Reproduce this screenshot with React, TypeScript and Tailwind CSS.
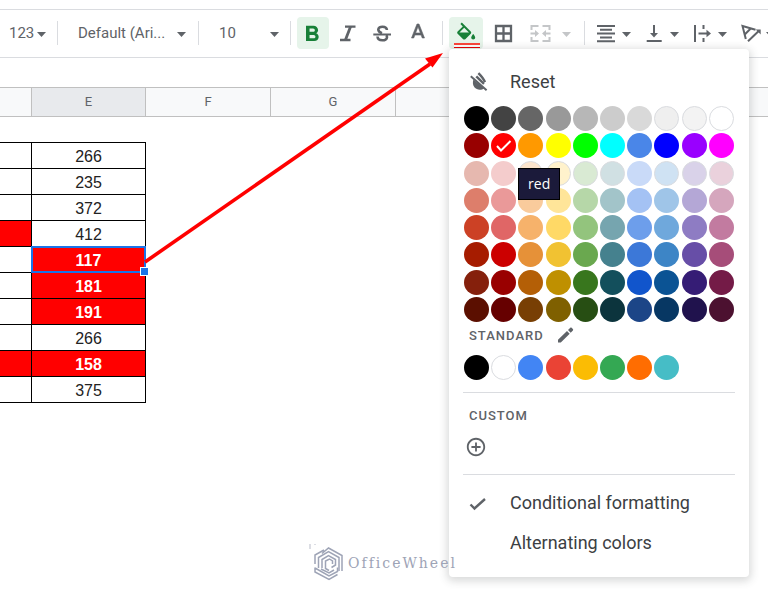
import type { ReactNode } from "react";
import { MdAddCircleOutline } from "react-icons/md";

const PALETTE = [
  ["#000000", "#434343", "#666666", "#999999", "#b7b7b7", "#cccccc", "#d9d9d9", "#efefef", "#f3f3f3", "#ffffff"],
  ["#980000", "#ff0000", "#ff9900", "#ffff00", "#00ff00", "#00ffff", "#4a86e8", "#0000ff", "#9900ff", "#ff00ff"],
  ["#e6b8af", "#f4cccc", "#fce5cd", "#fff2cc", "#d9ead3", "#d0e0e3", "#c9daf8", "#cfe2f3", "#d9d2e9", "#ead1dc"],
  ["#dd7e6b", "#ea9999", "#f9cb9c", "#ffe599", "#b6d7a8", "#a2c4c9", "#a4c2f4", "#9fc5e8", "#b4a7d6", "#d5a6bd"],
  ["#cc4125", "#e06666", "#f6b26b", "#ffd966", "#93c47d", "#76a5af", "#6d9eeb", "#6fa8dc", "#8e7cc3", "#c27ba0"],
  ["#a61c00", "#cc0000", "#e69138", "#f1c232", "#6aa84f", "#45818e", "#3c78d8", "#3d85c6", "#674ea7", "#a64d79"],
  ["#85200c", "#990000", "#b45f06", "#bf9000", "#38761d", "#134f5c", "#1155cc", "#0b5394", "#351c75", "#741b47"],
  ["#5b0f00", "#660000", "#783f04", "#7f6000", "#274e13", "#0c343d", "#1c4587", "#073763", "#20124d", "#4c1130"],
];

const STANDARD = ["#000000", "#ffffff", "#4285f4", "#ea4335", "#fbbc04", "#34a853", "#ff6d01", "#46bdc6"];

// These need a ring to stay visible on white
const PALE = ["#efefef", "#f3f3f3", "#ffffff", "#fce5cd", "#fff2cc", "#d9ead3", "#d0e0e3", "#cfe2f3", "#d9d2e9", "#ead1dc"];

const ROWS = [
  { value: 266 },
  { value: 235 },
  { value: 372 },
  { value: 412, leftRed: true },
  { value: 117, red: true, selected: true },
  { value: 181, red: true },
  { value: 191, red: true },
  { value: 266 },
  { value: 158, red: true, leftRed: true },
  { value: 375 },
];

function Caret() {
  return (
    <svg width="9" height="5" viewBox="0 0 9 5" className="mt-0.5 shrink-0" fill="currentColor" aria-hidden="true">
      <path d="M0 0h9L4.5 5z" />
    </svg>
  );
}

function Icon({ children }: { children: ReactNode }) {
  return (
    <svg
      width="24"
      height="24"
      viewBox="0 0 24 24"
      className="shrink-0"
      fill="none"
      stroke="currentColor"
      strokeWidth="2"
      aria-hidden="true"
    >
      {children}
    </svg>
  );
}

function Separator({ className = "" }: { className?: string }) {
  return <span className={`mt-1 h-6 w-px shrink-0 bg-[#dadce0] ${className}`} />;
}

function ToolButton({ label, className, children }: { label: string; className: string; children: ReactNode }) {
  return (
    <button type="button" aria-label={label} className={`flex h-8 shrink-0 items-center ${className}`}>
      {children}
    </button>
  );
}

function Toolbar() {
  return (
    <div className="flex h-12 items-start overflow-hidden border-b border-[#dadce0] pt-[7px] text-[15px] text-[#5f6368]">
      <ToolButton label="More formats" className="w-[57px] gap-[3px] pl-[9px]">
        <span>123</span>
        <Caret />
      </ToolButton>
      <Separator />
      <label className="flex h-8 w-[140px] shrink-0 items-center pl-5">
        <select aria-label="Font" className="w-[99px] shrink-0 appearance-none bg-transparent">
          <option>Default (Ari...</option>
        </select>
        <Caret />
      </label>
      <Separator />
      <label className="flex h-8 w-[91px] shrink-0 items-center pl-5">
        <select aria-label="Font size" className="w-[51px] shrink-0 appearance-none bg-transparent">
          <option>10</option>
        </select>
        <Caret />
      </label>
      <Separator className="mr-1.5" />
      <ToolButton label="Bold" className="mr-px w-8 justify-center rounded-sm bg-[#e6f4ea] text-[#188038]">
        <Icon>
          <path
            transform="translate(-3.26 .44) scale(1.18 1.09)"
            fill="currentColor"
            stroke="none"
            d="M15.6 10.79c.97-.67 1.65-1.77 1.65-2.79 0-2.26-1.75-4-4-4H7v14h7.04c2.09 0 3.71-1.7 3.71-3.79 0-1.52-.86-2.82-2.15-3.42zM10 6.5h3c.83 0 1.5.67 1.5 1.5s-.67 1.5-1.5 1.5h-3v-3zm3.5 9H10v-3h3.5c.83 0 1.5.67 1.5 1.5s-.67 1.5-1.5 1.5z"
          />
        </Icon>
      </ToolButton>
      <ToolButton label="Italic" className="w-9 justify-center">
        <Icon>
          <path d="M9 5.7h10.5M4 19h10.500" strokeWidth="2.3" />
          <path d="M14.6 5.5L9.4 19" strokeWidth="2.8" />
        </Icon>
      </ToolButton>
      <ToolButton label="Strikethrough" className="w-[34px] justify-center">
        <Icon>
          <path
            d="M15.9 9C15.6 4.6 7.3 4.7 7.3 8.6c0 1.9 1.5 2.9 3.7 3.6M6.5 15.5c.3 5 9.5 4.9 9.5.7 0-.8-.3-1.5-.8-2"
            strokeWidth="2.6"
          />
          <path d="M2.3 13.5H20" strokeWidth="2" />
        </Icon>
      </ToolButton>
      <ToolButton label="Text color" className="w-9 justify-center">
        <Icon>
          <path
            fill="currentColor"
            strokeWidth=".6"
            d="M11 3L5.5 17h2.25l1.12-3h6.25l1.12 3h2.25L13 3h-2zm-1.38 9L12 5.67 14.38 12H9.62z"
          />
        </Icon>
      </ToolButton>
      <Separator className="mx-1.5" />
      <ToolButton label="Fill color" className="w-[34px] rounded-sm bg-[#e6f4ea] text-[#188038]">
        <svg width="34" height="32" viewBox="0 0 34 32" aria-hidden="true">
          <path
            transform="translate(5.2 5.6)"
            fill="currentColor"
            d="M16.56 8.94L7.62 0 6.21 1.41l2.38 2.38-5.15 5.15c-.59.59-.59 1.54 0 2.12l5.5 5.5c.29.29.68.44 1.06.44s.77-.15 1.06-.44l5.5-5.5c.59-.58.59-1.53 0-2.12zM5.21 10L10 5.21 14.79 10H5.21zM19 11.5s-2 2.17-2 3.5c0 1.1.9 2 2 2s2-.9 2-2c0-1.33-2-3.5-2-3.5z"
          />
          <path fill="#fff" d="M5 28h26v2H5z" />
          <path fill="#f9463a" d="M5 26h26v2H5z" />
          <path fill="#e60000" d="M5 30h26v1H5z" />
        </svg>
      </ToolButton>
      <ToolButton label="Borders" className="w-10 justify-center">
        <Icon>
          <path d="M5 5h15v15H5zM12.5 5v15M5 12.5h15" strokeWidth="2.3" />
        </Icon>
      </ToolButton>
      <ToolButton label="Merge cells" className="w-8 justify-center text-[#c4c6c8]">
        <Icon>
          <path d="M11.5 5H4.5v4M15.5 5h7v4M11.5 20H4.5v-4M15.5 20h7v-4" />
          <path d="M3.5 12.5h5M23.5 12.5h-5" strokeWidth="1.8" />
          <path d="M8 9l4 3.5L8 16zM19 9l-4 3.5 4 3.5z" fill="currentColor" stroke="none" />
        </Icon>
      </ToolButton>
      <ToolButton label="Merge type" className="w-[23px] justify-center text-[#c4c6c8]">
        <Caret />
      </ToolButton>
      <Separator className="mx-1.5" />
      <ToolButton label="Horizontal align" className="w-12 gap-1 pl-[3px]">
        <Icon>
          <path d="M3 5h18M6 8.8h12M3 12.6h18M6 16.4h12M3 20.2h18" />
        </Icon>
        <Caret />
      </ToolButton>
      <ToolButton label="Vertical align" className="w-12 gap-1 pl-[3px]">
        <Icon>
          <path d="M4.7 20h15M12 4v9" />
          <path d="M8 12h8l-4 4.5z" fill="currentColor" stroke="none" />
        </Icon>
        <Caret />
      </ToolButton>
      <ToolButton label="Text wrapping" className="w-12 gap-1 pl-[3px]">
        <Icon>
          <path d="M5 4v17M13.5 4v4M13.5 17v4M8.5 12.5H18" />
          <path d="M16.5 8.8l4.5 3.7-4.5 3.7z" fill="currentColor" stroke="none" />
        </Icon>
        <Caret />
      </ToolButton>
      <ToolButton label="Text rotation" className="w-12 gap-1 pl-[3px]">
        <Icon>
          <path d="M17.5 8.7L4.5 5l3.3 13M12.7 7.5L6.5 13.7" />
          <path d="M10 20.3L21 9.8" />
          <path d="M17.7 8.5h5v5z" fill="currentColor" stroke="none" />
        </Icon>
        <Caret />
      </ToolButton>
    </div>
  );
}

function Swatch({ color, children }: { color: string; children?: ReactNode }) {
  return (
    <div className="relative flex items-center justify-center">
      <button
        type="button"
        aria-label={color}
        className={`flex size-[25px] items-center justify-center rounded-full ${
          PALE.includes(color) ? "border border-[#dadce0]" : ""
        }`}
        style={{ backgroundColor: color }}
      >
        {children && (
          <svg width="17" height="17" viewBox="0 0 17 17" fill="none" stroke="#fff" strokeWidth="2" aria-hidden="true">
            <path d="M2 9l4 4.5L15.5 4" />
          </svg>
        )}
      </button>
      {children}
    </div>
  );
}

function ColorMenu() {
  return (
    <div className="absolute left-[449px] top-[49px] z-10 w-[300px] rounded bg-white px-3.5 pb-3.5 pt-[13px] text-lg text-[#3c4043] shadow-[0_2px_9px_2px_rgba(60,64,67,0.2)]">
      <button type="button" className="flex h-10 w-full items-center gap-[19px] pl-1">
        <svg width="24" height="24" viewBox="0 0 24 24" fill="none" stroke="#5f6368" aria-hidden="true">
          <path d="M6.4 9.5L17 18.2c-2.500 2.300-7.300 2-9.600-.9-1.700-2.200-1.900-4.800-1-7.800z" fill="#5f6368" stroke="none" />
          <path d="M3.800 6.200L19.600 20.200" strokeWidth="2" />
          <path d="M9.300 6.300l7.700 7.600" strokeWidth="2.400" />
          <path d="M11.400 3.200c3 3 5.400 5.900 6.500 9" strokeWidth="2.400" />
        </svg>
        Reset
      </button>
      <div className="mt-[3px] grid h-[218px] grid-cols-10">
        {PALETTE.flat().map((color) => (
          <Swatch key={color} color={color}>
            {color === "#ff0000" && (
              <span
                role="tooltip"
                className="absolute left-7 top-9 z-10 flex h-8 w-[42px] items-center justify-center border border-black bg-[#1b1a3a] font-['Open_Sans',sans-serif] text-sm text-white"
              >
                red
              </span>
            )}
          </Swatch>
        ))}
      </div>
      <div className="flex h-[27px] items-center gap-2 pl-1.5 text-[#5f6368]">
        <h2 className="text-[13px] font-medium tracking-[1px]">STANDARD</h2>
        <button type="button" aria-label="Edit standard colors" className="pb-1">
          <svg width="24" height="18" viewBox="0 0 24 18" fill="currentColor" aria-hidden="true">
            <path d="M6 13.800L15 5l2.700 2.800L8.800 16.500H6zM16 4l2.300-2.200c.4-.4.900-.4 1.300 0l1.300 1.300c.4.4.4.9 0 1.300l-2.200 2.300z" />
          </svg>
        </button>
      </div>
      <div className="mt-1 grid h-[27px] grid-cols-10">
        {STANDARD.map((color) => (
          <Swatch key={color} color={color} />
        ))}
      </div>
      <hr className="mt-[11px] border-[#dadce0]" />
      <h2 className="mt-2.5 flex h-[27px] items-center pl-1.5 text-[13px] font-medium tracking-[1px] text-[#5f6368]">
        CUSTOM
      </h2>
      <button type="button" aria-label="Add custom color" className="mt-[3px] flex h-7 items-center pl-0.5 text-[#5f6368]">
        <MdAddCircleOutline size={22} />
      </button>
      <hr className="mt-[13px] border-[#dadce0]" />
      <button type="button" className="mt-2 flex h-10 w-full items-center gap-[23px] pl-1">
        <svg width="20" height="20" viewBox="0 0 20 20" fill="none" stroke="#5f6368" strokeWidth="2.400" aria-hidden="true">
          <path d="M3.500 11.500l4 4L18 6" />
        </svg>
        Conditional formatting
      </button>
      <button type="button" className="flex h-10 w-full items-center pl-[47px]">
        Alternating colors
      </button>
    </div>
  );
}

function Sheet() {
  return (
    <>
      <div className="mt-[29px] flex h-[30px] border-y border-[#c0c0c0] bg-[#f8f9fa] text-center text-[13px] leading-7 text-[#5f6368]">
        <div className="w-8 shrink-0 border-r border-[#c0c0c0]" />
        <div className="w-[114px] shrink-0 border-r border-[#c0c0c0] bg-[#e8eaed]">E</div>
        <div className="w-[125px] shrink-0 border-r border-[#c0c0c0]">F</div>
        <div className="w-[125px] shrink-0 border-r border-[#c0c0c0]">G</div>
        <div className="grow" />
      </div>
      <table className="mt-[25px] w-[146px] table-fixed border-separate border-spacing-0 border-t border-black text-center font-['Liberation_Sans',sans-serif] text-base text-[#222]">
        <tbody>
          {ROWS.map((row, i) => (
            <tr key={i} className="h-[26px]">
              <td className={`w-8 border-b border-r border-black p-0 ${row.leftRed ? "bg-[#ff0000]" : ""}`} />
              <td
                className={`relative border-b border-r border-black p-0 pt-0.5 leading-[23px] ${
                  row.red ? "bg-[#ff0000] font-bold text-white" : ""
                }`}
              >
                {row.value}
                {row.selected && (
                  <>
                    <span className="absolute -inset-px border-2 border-[#1a73e8]" />
                    <span className="absolute -bottom-1 -right-1 z-10 size-[9px] border border-white bg-[#1a73e8]" />
                  </>
                )}
              </td>
            </tr>
          ))}
        </tbody>
      </table>
    </>
  );
}

function Watermark() {
  return (
    <div className="absolute left-[309px] top-[544px] z-20 flex items-center gap-1 text-[#9ea4b6]">
      <svg width="35" height="38" viewBox="0 0 35 38" fill="none" stroke="currentColor" strokeWidth="1.5" aria-hidden="true">
        <path d="M1 0v5M6 0v1" strokeWidth="1.2" opacity=".6" />
        <path d="M6 20V11L15 6M13 9.500l6.500-5.500L33 11.500V27" />
        <path d="M9.500 24V13.500l10-6L30 13.500V27" />
        <path d="M13 24v-8.500l6.500-4 7 4V21l-4 2.500" />
        <path d="M16.500 16.500v8l3.500 2M16.500 17l4-2 3 2v3" />
        <path d="M6 23.500v4.500l14 7.500 8.500-5M6 24l14 8 8.500-4.500v-4M12 25l8 4 5-3" />
      </svg>
      <span className="font-['DejaVu_Serif',serif] text-sm tracking-[2px]">OfficeWheel</span>
    </div>
  );
}

export default function App() {
  return (
    <main className="relative min-h-screen overflow-hidden bg-white pt-[9px] font-[Roboto,sans-serif]">
      <div className="border-t border-[#dadce0]">
        <Toolbar />
        <Sheet />
      </div>
      <ColorMenu />
      <svg
        width="310"
        height="220"
        viewBox="0 0 310 220"
        className="pointer-events-none absolute left-[140px] top-[49px]"
        aria-hidden="true"
      >
        <path d="M5 213L290 15" stroke="#ff0000" strokeWidth="3.6" />
        <path d="M303 4L285 9.5l7.500 9z" fill="#ff0000" />
      </svg>
      <Watermark />
    </main>
  );
}
